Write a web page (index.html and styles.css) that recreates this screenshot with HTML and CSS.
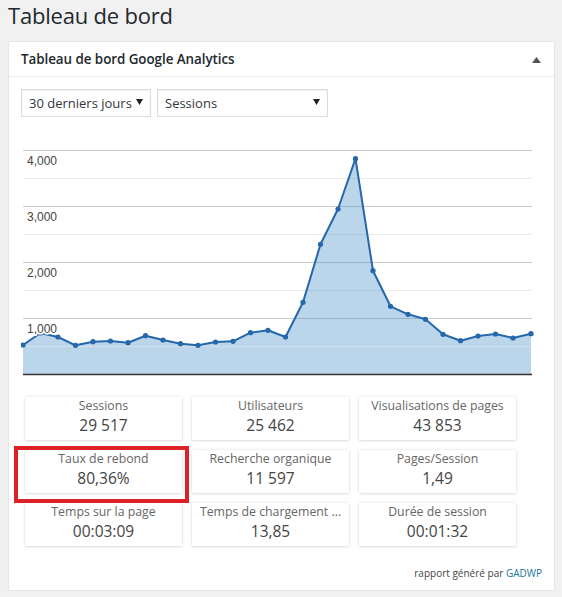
FILE: index.html
```html
<!DOCTYPE html>
<html lang="fr">
<head>
<meta charset="utf-8">
<title>Tableau de bord</title>
<link rel="stylesheet" href="styles.css">
</head>
<body>
<h1 class="page-title">Tableau de bord</h1>
<div class="postbox">
  <div class="postbox-header">
    <h2 class="postbox-title">Tableau de bord Google Analytics</h2>
    <svg class="toggle" width="9" height="6" viewBox="0 0 9 6"><path d="M0 6 L4.5 0 L9 6 Z" fill="#555"/></svg>
  </div>
  <div class="postbox-body">
    <div class="filters">
      <div class="select select-period"><span>30 derniers jours</span><svg class="caret" width="7" height="6" viewBox="0 0 7 6"><path d="M0 0 L7 0 L3.5 6 Z" fill="#222"/></svg></div>
      <div class="select select-metric"><span>Sessions</span><svg class="caret" width="7" height="6" viewBox="0 0 7 6"><path d="M0 0 L7 0 L3.5 6 Z" fill="#222"/></svg></div>
    </div>
    <svg class="chart" width="521" height="265" viewBox="0 0 521 265">
      <g stroke-width="1">
        <line x1="2" x2="511" y1="57.5" y2="57.5" stroke="#ebebeb"/>
        <line x1="2" x2="511" y1="113.5" y2="113.5" stroke="#ebebeb"/>
        <line x1="2" x2="511" y1="169.5" y2="169.5" stroke="#ebebeb"/>
        <line x1="2" x2="511" y1="29.5" y2="29.5" stroke="#cccccc"/>
        <line x1="2" x2="511" y1="85.5" y2="85.5" stroke="#cccccc"/>
        <line x1="2" x2="511" y1="141.5" y2="141.5" stroke="#cccccc"/>
        <line x1="2" x2="511" y1="197.5" y2="197.5" stroke="#cccccc"/>
      </g>
      <polygon fill="#1e73be" fill-opacity="0.3" points="2,224 19.5,212 37,216 54.5,224.3 72,220.7 89.5,220 107,221.7 124.5,214.7 142,219 159.5,222.7 177,224.3 194.5,221 212,220.3 229.5,211.7 247,209.3 264.5,216 282,181.3 299.5,123.3 317,88 334.5,37.7 352,149.7 369.5,185.3 387,193.3 404.5,198.3 422,213.3 439.5,219.7 457,215 474.5,213 492,217 510,212.7 510,253 2,253"/>
      <line x1="2" x2="511" y1="225.5" y2="225.5" stroke="#ebebeb" stroke-opacity="0.5"/>
      <line x1="2" x2="511" y1="253.5" y2="253.5" stroke="#333" stroke-width="1.3"/>
      <polyline fill="none" stroke="#2467aa" stroke-width="2" stroke-linejoin="round" points="2,224 19.5,212 37,216 54.5,224.3 72,220.7 89.5,220 107,221.7 124.5,214.7 142,219 159.5,222.7 177,224.3 194.5,221 212,220.3 229.5,211.7 247,209.3 264.5,216 282,181.3 299.5,123.3 317,88 334.5,37.7 352,149.7 369.5,185.3 387,193.3 404.5,198.3 422,213.3 439.5,219.7 457,215 474.5,213 492,217 510,212.7"/>
      <g fill="#2467aa">
        <circle cx="2" cy="224" r="2.6"/><circle cx="19.5" cy="212" r="2.6"/><circle cx="37" cy="216" r="2.6"/><circle cx="54.5" cy="224.3" r="2.6"/><circle cx="72" cy="220.7" r="2.6"/><circle cx="89.5" cy="220" r="2.6"/><circle cx="107" cy="221.7" r="2.6"/><circle cx="124.5" cy="214.7" r="2.6"/><circle cx="142" cy="219" r="2.6"/><circle cx="159.5" cy="222.7" r="2.6"/><circle cx="177" cy="224.3" r="2.6"/><circle cx="194.5" cy="221" r="2.6"/><circle cx="212" cy="220.3" r="2.6"/><circle cx="229.5" cy="211.7" r="2.6"/><circle cx="247" cy="209.3" r="2.6"/><circle cx="264.5" cy="216" r="2.6"/><circle cx="282" cy="181.3" r="2.6"/><circle cx="299.5" cy="123.3" r="2.6"/><circle cx="317" cy="88" r="2.6"/><circle cx="334.5" cy="37.7" r="2.6"/><circle cx="352" cy="149.7" r="2.6"/><circle cx="369.5" cy="185.3" r="2.6"/><circle cx="387" cy="193.3" r="2.6"/><circle cx="404.5" cy="198.3" r="2.6"/><circle cx="422" cy="213.3" r="2.6"/><circle cx="439.5" cy="219.7" r="2.6"/><circle cx="457" cy="215" r="2.6"/><circle cx="474.5" cy="213" r="2.6"/><circle cx="492" cy="217" r="2.6"/><circle cx="510" cy="212.7" r="2.6"/>
      </g>
      <g class="axis-label">
        <text x="6" y="43.5">4,000</text>
        <text x="6" y="99.5">3,000</text>
        <text x="6" y="155.5">2,000</text>
        <text x="6" y="211.5">1,000</text>
      </g>
    </svg>
    <div class="stats">
      <div class="stat"><div class="stat-label">Sessions</div><div class="stat-value">29 517</div></div>
      <div class="stat"><div class="stat-label">Utilisateurs</div><div class="stat-value">25 462</div></div>
      <div class="stat"><div class="stat-label">Visualisations de pages</div><div class="stat-value">43 853</div></div>
      <div class="stat"><div class="stat-label">Taux de rebond</div><div class="stat-value">80,36%</div></div>
      <div class="stat"><div class="stat-label">Recherche organique</div><div class="stat-value">11 597</div></div>
      <div class="stat"><div class="stat-label">Pages/Session</div><div class="stat-value">1,49</div></div>
      <div class="stat"><div class="stat-label">Temps sur la page</div><div class="stat-value">00:03:09</div></div>
      <div class="stat"><div class="stat-label">Temps de chargement ...</div><div class="stat-value">13,85</div></div>
      <div class="stat"><div class="stat-label">Durée de session</div><div class="stat-value">00:01:32</div></div>
      <div class="highlight"></div>
    </div>
    <div class="report-footer">rapport généré par <a href="#" class="report-link">GADWP</a></div>
  </div>
</div>
</body>
</html>
```
FILE: styles.css
```css
* { box-sizing: border-box; }
body {
  margin: 0;
  background: #f1f1f1;
  font-family: "Open Sans", "Noto Sans", sans-serif;
  color: #23282d;
}
.page-title {
  margin: 0;
  padding: 0 0 0 8px;
  font-size: 22px;
  font-weight: 400;
  line-height: 30px;
  height: 41px;
  color: #23282d;
  letter-spacing: -0.2px;
}
.postbox {
  margin: 0 7px 0 8px;
  background: #fff;
  border: 1px solid #e5e5e5;
  box-shadow: 0 1px 1px rgba(0,0,0,0.04);
}
.postbox-header {
  height: 35px;
  display: flex;
  align-items: center;
  justify-content: space-between;
  padding: 0 12px 0 12px;
  border-bottom: 1px solid #eee;
}
.postbox-title {
  margin: 0;
  font-size: 13.4px;
  font-weight: 600;
  color: #23282d;
  letter-spacing: -0.05px;
}
.toggle { margin-right: 1px; margin-top: 1px; }
.postbox-body {
  padding: 12px 12px 10px 12px;
}
.filters {
  display: flex;
  gap: 6px;
}
.select {
  height: 28px;
  border: 1px solid #ddd;
  box-shadow: inset 0 1px 2px rgba(0,0,0,0.07);
  display: flex;
  align-items: center;
  justify-content: space-between;
  padding: 0 7px 0 7px;
  font-size: 13px;
  color: #32373c;
}
.select-period { width: 130px; }
.select-metric { width: 171px; }
.caret { margin-top: -2px; }
.chart {
  display: block;
  margin-top: 4px;
}
.axis-label text {
  font-family: "Liberation Sans", Arial, sans-serif;
  font-size: 12px;
  fill: #444;
  stroke: #fff;
  stroke-width: 3px;
  paint-order: stroke;
}
.stats {
  position: relative;
  margin: 11px 0 0 4px;
  width: 491px;
  display: grid;
  grid-template-columns: repeat(3, 157px);
  grid-auto-rows: 43px;
  gap: 10px;
}
.stat {
  background: #fff;
  box-shadow: 0 0 3px rgba(0,0,0,0.13), 0 1px 2px rgba(0,0,0,0.08);
  text-align: center;
  padding-top: 0;
}
.stat-label {
  font-size: 12.3px;
  line-height: 17px;
  color: #666;
  white-space: nowrap;
}
.stat-value {
  font-size: 15.5px;
  line-height: 22px;
  color: #444;
}
.highlight {
  position: absolute;
  left: -11px;
  top: 49px;
  width: 175px;
  height: 57px;
  border: 4px solid #dd2128;
  pointer-events: none;
}
.report-footer {
  margin-top: 20px;
  text-align: right;
  font-size: 10px;
  line-height: 14px;
  color: #444;
}
.report-link {
  color: #21759b;
  text-decoration: none;
}
```
